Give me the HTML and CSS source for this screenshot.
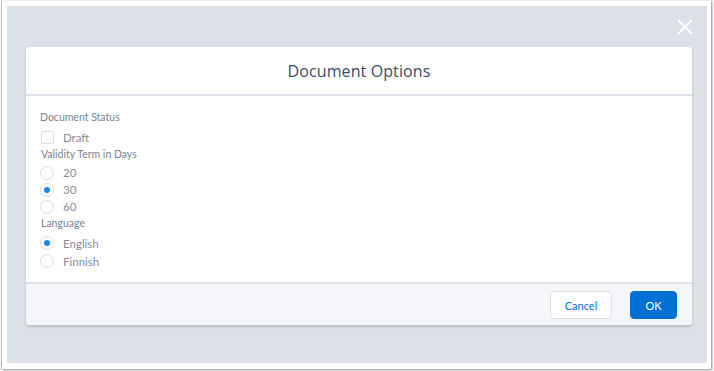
FILE: index.html
```html
<!DOCTYPE html>
<html>
<head>
<meta charset="utf-8">
<link rel="stylesheet" href="styles.css">
</head>
<body>
<div class="frame">
  <div class="backdrop">
    <button class="close" aria-label="Close">
      <svg width="14" height="14" viewBox="0 0 14 14"><path d="M1 1L13 13M13 1L1 13" stroke="#fff" stroke-width="2" stroke-linecap="square"/></svg>
    </button>
    <div class="modal">
      <div class="modal-header">
        <h2 class="title">Document Options</h2>
      </div>
      <div class="modal-body">
        <div class="label">Document Status</div>
        <label class="option">
          <span class="checkbox"></span>
          <span class="opt-text">Draft</span>
        </label>
        <div class="label label-indent">Validity Term in Days</div>
        <div class="group">
          <label class="option"><span class="radio"></span><span class="opt-text">20</span></label>
          <label class="option"><span class="radio checked"></span><span class="opt-text">30</span></label>
          <label class="option"><span class="radio"></span><span class="opt-text">60</span></label>
        </div>
        <div class="label label-indent">Language</div>
        <div class="group group-lang">
          <label class="option"><span class="radio checked"></span><span class="opt-text">English</span></label>
          <label class="option"><span class="radio"></span><span class="opt-text">Finnish</span></label>
        </div>
      </div>
      <div class="modal-footer">
        <button class="btn btn-neutral">Cancel</button>
        <button class="btn btn-brand">OK</button>
      </div>
    </div>
  </div>
</div>
</body>
</html>
```

FILE: styles.css
```css
* { box-sizing: border-box; }
html, body { margin: 0; padding: 0; background: #ffffff; }
body { font-family: Lato, "Open Sans", "Liberation Sans", sans-serif; }

.frame {
  width: 710px;
  height: 369px;
  margin: 0 2px 2px 1px;
  border-left: 1px solid #b9b9b9;
  border-top: 1px solid #eeeeee;
  box-shadow: 1px 1px 2px rgba(0,0,0,0.45);
  padding: 5px 4px 5px 5px;
  background: #fff;
}

.backdrop {
  position: relative;
  background: #dce1e8;
  height: 357px;
  padding: 41px 15px 0 19px;
}

.close {
  position: absolute;
  top: 8px;
  right: 9px;
  width: 26px;
  height: 26px;
  border: 0;
  padding: 0;
  background: transparent;
  display: flex;
  align-items: center;
  justify-content: center;
}

.modal {
  background: #fff;
  border-radius: 4px;
  box-shadow: 0 2px 3px rgba(0,0,0,0.16);
  display: flex;
  flex-direction: column;
}

.modal-header {
  height: 49px;
  border-bottom: 2px solid #dde2ea;
  display: flex;
  align-items: center;
  justify-content: center;
}

.title {
  margin: 0;
  font-family: "Open Sans", "Liberation Sans", sans-serif;
  font-size: 16px;
  font-weight: 400;
  color: #3e4c66;
  letter-spacing: 0.1px;
}

.modal-body {
  height: 186px;
  padding: 13px 14px 0 14px;
}

.label {
  font-size: 10.5px;
  line-height: 16px;
  color: #7a8391;
}
.label-indent { padding-left: 1px; }

.option {
  display: flex;
  align-items: center;
  height: 17px;
  font-size: 11.5px;
  color: #858e9b;
}

.label + .option { margin-top: 4px; }
.group { margin-top: 2px; }
.group-lang { margin-top: 3px; }
.group-lang .option { height: 18px; }

.checkbox {
  width: 13px;
  height: 13px;
  border: 1px solid #d8dde6;
  border-radius: 2px;
  margin-left: 1px;
  margin-right: 9px;
  background: #fff;
}

.radio {
  width: 14px;
  height: 14px;
  border: 1px solid #d8dde6;
  border-radius: 50%;
  margin-right: 9px;
  background: #fff;
  display: flex;
  align-items: center;
  justify-content: center;
}
.radio.checked::after {
  content: "";
  width: 6px;
  height: 6px;
  border-radius: 50%;
  background: #1589ee;
}

.opt-text { line-height: 17px; }

.modal-footer {
  height: 43px;
  background: #f4f6f9;
  border-top: 2px solid #dde2ea;
  border-radius: 0 0 4px 4px;
  display: flex;
  justify-content: flex-end;
  align-items: center;
  gap: 18px;
  padding: 1px 15px 0 0;
}

.btn {
  height: 28px;
  border-radius: 4px;
  font-family: inherit;
  font-size: 11px;
  padding: 0;
}
.btn-neutral {
  width: 62px;
  background: #fff;
  border: 1px solid #d8dde6;
  color: #0070d2;
}
.btn-brand {
  width: 47px;
  background: #0070d2;
  border: 1px solid #0070d2;
  color: #fff;
}
```
